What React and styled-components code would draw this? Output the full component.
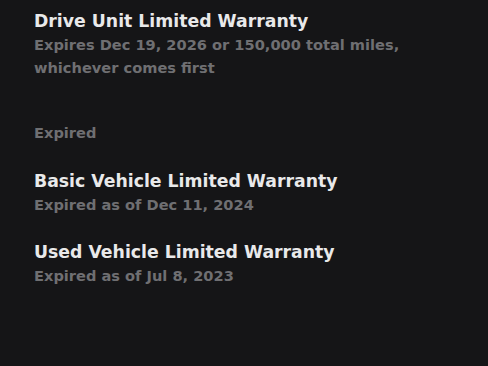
import React from "react";
import styled, { createGlobalStyle } from "styled-components";

const GlobalStyle = createGlobalStyle`
  html, body {
    margin: 0;
    padding: 0;
    background: #151517;
  }
  body {
    font-family: "DejaVu Sans", "Noto Sans", sans-serif;
    -webkit-font-smoothing: antialiased;
  }
`;

const Page = styled.div`
  width: 488px;
  height: 366px;
  box-sizing: border-box;
  padding: 9px 34px 0;
  background: #151517;
  overflow: hidden;
`;

const Item = styled.div`
  display: flex;
  flex-direction: column;
  margin-bottom: ${(props) => props.gap || "0"};
`;

const Title = styled.div`
  color: #e9e9ea;
  font-size: 17.3px;
  font-weight: 700;
  line-height: 24px;
`;

const Sub = styled.div`
  color: #6f6f72;
  font-size: 14.6px;
  font-weight: 700;
  line-height: 23px;
`;

const Section = styled.div`
  color: #6f6f72;
  font-size: 14.6px;
  font-weight: 700;
  line-height: 23px;
  margin: 0 0 25px;
`;

const warranties = [
  { title: "Basic Vehicle Limited Warranty", sub: "Expired as of Dec 11, 2024" },
  { title: "Used Vehicle Limited Warranty", sub: "Expired as of Jul 8, 2023" },
];

const App = () => (
  <>
    <GlobalStyle />
    <Page>
      <Item gap="42px">
        <Title>Drive Unit Limited Warranty</Title>
        <Sub>
          Expires Dec 19, 2026 or 150,000 total miles,
          <br />
          whichever comes first
        </Sub>
      </Item>
      <Section>Expired</Section>
      {warranties.map((w) => (
        <Item key={w.title} gap="24px">
          <Title>{w.title}</Title>
          <Sub>{w.sub}</Sub>
        </Item>
      ))}
    </Page>
  </>
);

export default App;
